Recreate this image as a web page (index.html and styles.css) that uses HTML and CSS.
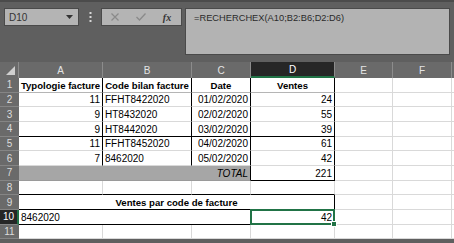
FILE: index.html
```html
<!DOCTYPE html>
<html lang="fr">
<head>
    <meta charset="UTF-8">
    <title>RECHERCHEX</title>
    <link rel="stylesheet" href="styles.css">
</head>
<body>
    <div class="topbar">
        <div class="namebox">
            <span>D10</span>
            <svg width="7" height="4" viewBox="0 0 7 4"><path d="M0 0H7L3.5 4Z" fill="#333"/></svg>
        </div>
        <div class="grip">
            <svg width="3" height="10" viewBox="0 0 3 10"><rect x="0.5" y="0" width="2" height="2" fill="#d6d6d6"/><rect x="0.5" y="4" width="2" height="2" fill="#d6d6d6"/><rect x="0.5" y="8" width="2" height="2" fill="#d6d6d6"/></svg>
        </div>
        <div class="fxbox">
            <span class="slot"><svg width="8" height="8" viewBox="0 0 8 8"><path d="M0.5 0.5L7.5 7.5M7.5 0.5L0.5 7.5" stroke="#8a8a8a" stroke-width="1.2"/></svg></span>
            <span class="slot"><svg width="10" height="8" viewBox="0 0 10 8"><path d="M0.5 4L3.5 7L9.5 0.5" stroke="#8a8a8a" stroke-width="1.3" fill="none"/></svg></span>
            <span class="slot fx">fx</span>
        </div>
        <div class="formula">=RECHERCHEX(A10;B2:B6;D2:D6)</div>
    </div>

    <div class="sheet">
        <div class="ch corner"><span class="tri"></span></div>
        <div class="ch">A</div>
        <div class="ch">B</div>
        <div class="ch">C</div>
        <div class="ch sel">D</div>
        <div class="ch">E</div>
        <div class="ch">F</div>
        <div class="ch"></div>

        <div class="rh">1</div>
        <div class="c m b kr hb">Typologie facture</div>
        <div class="c m b kr hb">Code bilan facture</div>
        <div class="c m b kr hb">Date</div>
        <div class="c m b kr hb">Ventes</div>
        <div class="c"></div><div class="c"></div><div class="c"></div>

        <div class="rh">2</div>
        <div class="c r kr">11</div>
        <div class="c kr">FFHT8422020</div>
        <div class="c r kr">01/02/2020</div>
        <div class="c r kr">24</div>
        <div class="c"></div><div class="c"></div><div class="c"></div>

        <div class="rh">3</div>
        <div class="c r kr">9</div>
        <div class="c kr">HT8432020</div>
        <div class="c r kr">02/02/2020</div>
        <div class="c r kr">55</div>
        <div class="c"></div><div class="c"></div><div class="c"></div>

        <div class="rh">4</div>
        <div class="c r kr kb">9</div>
        <div class="c kr kb">HT8442020</div>
        <div class="c r kr kb">03/02/2020</div>
        <div class="c r kr kb">39</div>
        <div class="c"></div><div class="c"></div><div class="c"></div>

        <div class="rh">5</div>
        <div class="c r kr">11</div>
        <div class="c kr">FFHT8452020</div>
        <div class="c r kr">04/02/2020</div>
        <div class="c r kr">61</div>
        <div class="c"></div><div class="c"></div><div class="c"></div>

        <div class="rh">6</div>
        <div class="c r kr">7</div>
        <div class="c kr">8462020</div>
        <div class="c r kr">05/02/2020</div>
        <div class="c r kr">42</div>
        <div class="c"></div><div class="c"></div><div class="c"></div>

        <div class="rh">7</div>
        <div class="c r i total kr span3">TOTAL</div>
        <div class="c r kr kb">221</div>
        <div class="c"></div><div class="c"></div><div class="c"></div>

        <div class="rh">8</div>
        <div class="c kb"></div><div class="c kb"></div><div class="c kb"></div><div class="c kb"></div>
        <div class="c"></div><div class="c"></div><div class="c"></div>

        <div class="rh">9</div>
        <div class="c m b kr kb span4">Ventes par code de facture</div>
        <div class="c"></div><div class="c"></div><div class="c"></div>

        <div class="rh sel">10</div>
        <div class="c kb span3">8462020</div>
        <div class="c r kb active">42</div>
        <div class="c"></div><div class="c"></div><div class="c"></div>

        <div class="rh">11</div>
        <div class="c"></div><div class="c"></div><div class="c"></div><div class="c"></div>
        <div class="c"></div><div class="c"></div><div class="c"></div>
    </div>
</body>
</html>
```

FILE: styles.css
```css
body {
    margin: 0;
    padding: 0;
    background-color: #5f5f5f;
    font-family: "Liberation Sans", Arial, sans-serif;
    overflow: hidden;
}
.topbar {
    height: 62px;
    box-sizing: border-box;
    border-top: 2px solid #4b4b4b;
    padding: 6px 0 0 4px;
    display: flex;
    align-items: flex-start;
}
.namebox {
    width: 75px;
    height: 18px;
    box-sizing: border-box;
    border: 1px solid #4a4a4a;
    background-color: #b4b4b4;
    display: flex;
    align-items: center;
    justify-content: space-between;
    padding: 0 5px 0 4px;
    font-size: 10px;
    color: #333;
}
.grip {
    width: 22px;
    display: flex;
    justify-content: center;
    padding-top: 4px;
}
.fxbox {
    width: 81px;
    height: 18px;
    box-sizing: border-box;
    border: 1px solid #4a4a4a;
    background-color: #b4b4b4;
    display: flex;
    align-items: center;
}
.slot {
    width: 26px;
    display: flex;
    justify-content: center;
}
.fx {
    font-family: "Liberation Serif", serif;
    font-style: italic;
    font-weight: bold;
    font-size: 10px;
    color: #333;
}
.formula {
    margin-left: 3px;
    width: 265px;
    height: 47px;
    box-sizing: border-box;
    border: 1px solid #4a4a4a;
    background-color: #b3b3b3;
    padding: 4px 8px;
    font-size: 9.3px;
    color: #2a2a2a;
}
.sheet {
    display: grid;
    grid-template-columns: 19px 84px 89px 59px 84px 58px 59px 1fr;
    grid-template-rows: 16px repeat(11, 14.67px);
    background-color: #fff;
}
.ch {
    background-color: #6a6a6a;
    color: #e4e4e4;
    border-right: 1px solid #8c8c8c;
    font-size: 10px;
    display: flex;
    align-items: center;
    justify-content: center;
    box-sizing: border-box;
}
.ch.sel {
    background-color: #262626;
    color: #fff;
    border-bottom: 2px solid #217346;
}
.corner {
    position: relative;
}
.tri {
    position: absolute;
    right: 3px;
    bottom: 3px;
    border-style: solid;
    border-width: 0 0 9px 9px;
    border-color: transparent transparent #cfcfcf transparent;
}
.rh {
    background-color: #6a6a6a;
    color: #dcdcdc;
    border-bottom: 1px solid #858585;
    font-size: 10px;
    display: flex;
    align-items: center;
    justify-content: center;
    box-sizing: border-box;
}
.rh.sel {
    background-color: #262626;
    color: #fff;
    border-right: 2px solid #217346;
}
.c {
    box-sizing: border-box;
    border-right: 1px solid #d9d9d9;
    border-bottom: 1px solid #d9d9d9;
    font-size: 10px;
    color: #000;
    padding: 0 2px 1px;
    display: flex;
    align-items: flex-end;
    white-space: nowrap;
    overflow: hidden;
}
.r {
    justify-content: flex-end;
}
.m {
    justify-content: center;
}
.b {
    font-weight: bold;
    font-size: 9.6px;
}
.i {
    font-style: italic;
}
.kr {
    border-right-color: #000;
}
.kb {
    border-bottom-color: #000;
}
.hb {
    border-bottom-color: #b5b5b5;
}
.span3 {
    grid-column: span 3;
}
.span4 {
    grid-column: span 4;
}
.total {
    background-color: #a6a6a6;
    border-bottom-color: #9a9a9a;
}
.active {
    position: relative;
    overflow: visible;
}
.active::after {
    content: "";
    position: absolute;
    left: -1px;
    top: -1px;
    right: -1px;
    bottom: -1px;
    border: 2px solid #217346;
}
.active::before {
    content: "";
    position: absolute;
    right: -3px;
    bottom: -3px;
    width: 4px;
    height: 4px;
    background-color: #217346;
    border: 1px solid #fff;
    z-index: 1;
}
```
